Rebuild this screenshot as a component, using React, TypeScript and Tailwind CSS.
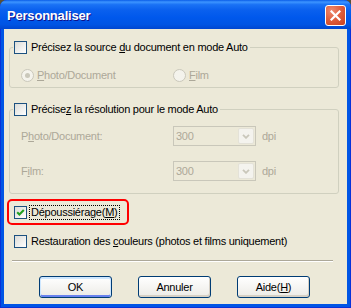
import React from "react";

const F = "font-['Liberation_Sans','Arial',sans-serif]";

function Check({ checked }: { checked?: boolean }) {
  return (
    <span className="flex h-[13px] w-[13px] shrink-0 items-center justify-center border border-[#1C5180] bg-linear-to-br from-[#DCDCD7] to-[#FFFFFF]">
      {checked && (
        <svg width="9" height="9" viewBox="0 0 9 9">
          <path d="M1.2 4.2 L3.4 6.4 L7.8 2" stroke="#21A121" strokeWidth="2.1" fill="none" />
        </svg>
      )}
    </span>
  );
}

function Radio({ selected }: { selected?: boolean }) {
  return (
    <span className="flex h-[13px] w-[13px] shrink-0 items-center justify-center rounded-full border border-[#CAC8BB] bg-[#F4F3EC]">
      {selected && <span className="h-[5px] w-[5px] rounded-full bg-[#CAC8BB]" />}
    </span>
  );
}

function Combo() {
  return (
    <div className="flex h-[20px] w-[83px] items-stretch border border-[#C9C7BA] bg-[#ECE9D8]">
      <span className="flex flex-1 items-center pl-[2px] text-[#ACA899]">300</span>
      <span className="m-[1px] flex w-[16px] items-center justify-center rounded-[2px] border border-[#E4E2D8] bg-[#F4F3EE]">
        <svg width="8" height="5" viewBox="0 0 8 5">
          <path d="M1 0.8 L4 3.8 L7 0.8" stroke="#C9C7BA" strokeWidth="1.8" fill="none" />
        </svg>
      </span>
    </div>
  );
}

function Button({ children, def }: { children: React.ReactNode; def?: boolean }) {
  return (
    <div
      className={
        "flex h-[22px] w-[73px] items-center justify-center rounded-[3px] border border-[#003C74] bg-linear-to-b from-[#FFFFFF] to-[#ECEBE6] text-black " +
        (def
          ? "shadow-[inset_0_1px_0_1px_#CEE7FF,inset_0_-1px_0_1px_#6982EE]"
          : "shadow-[inset_-1px_-2px_0_#D6D0C5]")
      }
    >
      {children}
    </div>
  );
}

export default function App() {
  return (
    <div className={`h-[308px] w-[351px] bg-[#5a5236] ${F} text-[11px] tracking-[-0.25px] text-black`}>
      <div className="flex h-full flex-col overflow-hidden rounded-t-[7px] bg-[#0055E5] shadow-[inset_0_0_0_1px_#0831D9]">
        {/* Title bar */}
        <div className="flex h-[29px] shrink-0 items-center bg-[linear-gradient(180deg,#0A5DE8_0%,#3D95FF_7%,#1A72F5_16%,#0A60EE_35%,#0058EC_60%,#0054E3_85%,#0046CF_100%)] pl-[7px]">
          <span className="pt-[3px] text-[13px] font-bold tracking-[-0.2px] text-white [text-shadow:1px_1px_0_#0F1089]">
            Personnaliser
          </span>
          <div className="ml-auto mr-[5px] mt-[2px] flex h-[21px] w-[21px] items-center justify-center rounded-[3px] border border-white bg-[radial-gradient(circle_at_30%_25%,#EE8A70_0%,#E0603F_45%,#C9401F_100%)]">
            <svg width="11" height="11" viewBox="0 0 11 11">
              <path d="M1.5 1.5 L9.5 9.5 M9.5 1.5 L1.5 9.5" stroke="white" strokeWidth="2.2" strokeLinecap="square" />
            </svg>
          </div>
        </div>

        {/* Body */}
        <div className="mx-[4px] mb-[4px] flex flex-1 flex-col bg-[#ECE9D8] pt-[12px]">
          {/* Group 1 */}
          <fieldset className="ml-[5px] mr-[8px] h-[47px] rounded-[3px] border border-[#D0D0BF]">
            <legend className="ml-[3px] pl-[1px] pr-[2px]">
              <div className="flex h-[13px] items-center gap-[4px]">
                <Check />
                <span>
                  Précisez la source <u>d</u>u document en mode Auto
                </span>
              </div>
            </legend>
            <div className="mt-[13px] flex items-center pl-[11px] text-[#ACA899]">
              <div className="flex w-[152px] items-center gap-[3px]">
                <Radio selected />
                <span>
                  <u>P</u>hoto/Document
                </span>
              </div>
              <div className="flex items-center gap-[3px]">
                <Radio />
                <span>
                  <u>F</u>ilm
                </span>
              </div>
            </div>
          </fieldset>

          {/* Group 2 */}
          <fieldset className="ml-[5px] mr-[8px] mt-[15px] h-[91px] rounded-[3px] border border-[#D0D0BF]">
            <legend className="ml-[3px] pl-[1px] pr-[2px]">
              <div className="flex h-[13px] items-center gap-[4px]">
                <Check />
                <span>
                  Précise<u>z</u> la résolution pour le mode Auto
                </span>
              </div>
            </legend>
            <div className="mt-[10px] flex flex-col gap-[15px] pl-[11px] text-[#ACA899]">
              <div className="flex items-center">
                <span className="w-[152px]">
                  P<u>h</u>oto/Document:
                </span>
                <Combo />
                <span className="ml-[6px]">dpi</span>
              </div>
              <div className="flex items-center">
                <span className="w-[152px]">
                  F<u>i</u>lm:
                </span>
                <Combo />
                <span className="ml-[6px]">dpi</span>
              </div>
            </div>
          </fieldset>

          {/* Dépoussiérage */}
          <div className="ml-[3px] mt-[5px] flex h-[26px] w-fit items-center rounded-[5px] border-2 border-[#FF0000] pl-[5px] pr-[7px]">
            <Check checked />
            <span className="ml-[2px] border border-dotted border-black px-[1px] leading-[13px]">
              Dépoussiérage(<u>M</u>)
            </span>
          </div>

          {/* Restauration */}
          <div className="ml-[10px] mt-[10px] flex h-[13px] items-center gap-[4px]">
            <Check />
            <span>
              Restauration des <u>c</u>ouleurs (photos et films uniquement)
            </span>
          </div>

          {/* Separator */}
          <div className="ml-[8px] mr-[14px] mt-[12px] h-[2px] border-t border-b border-t-[#ACA899] border-b-white" />

          {/* Buttons */}
          <div className="mt-[14px] flex gap-[26px] pl-[35px]">
            <Button def>OK</Button>
            <Button>Annuler</Button>
            <Button>
              <span>
                Aide(<u>H</u>)
              </span>
            </Button>
          </div>
        </div>
      </div>
    </div>
  );
}
